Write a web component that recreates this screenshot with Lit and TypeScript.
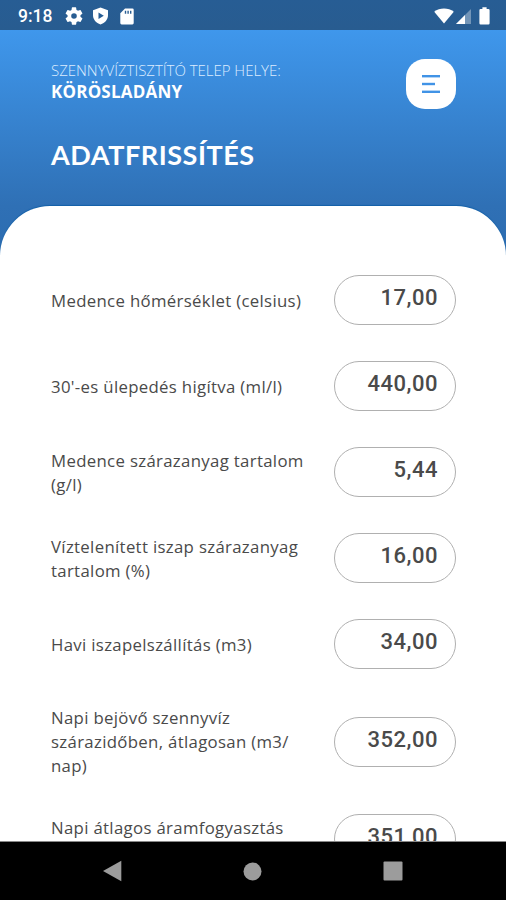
import { LitElement, html, css } from "lit";
import { customElement } from "lit/decorators.js";
import { classMap } from "lit/directives/class-map.js";

interface Reading {
  lines: string[];
  value: string;
  clipped?: boolean;
}

const readings: Reading[] = [
  { lines: ["Medence hőmérséklet (celsius)"], value: "17,00" },
  { lines: ["30'-es ülepedés higítva (ml/l)"], value: "440,00" },
  { lines: ["Medence szárazanyag tartalom", "(g/l)"], value: "5,44" },
  { lines: ["Víztelenített iszap szárazanyag", "tartalom (%)"], value: "16,00" },
  { lines: ["Havi iszapelszállítás (m3)"], value: "34,00" },
  { lines: ["Napi bejövő szennyvíz", "szárazidőben, átlagosan (m3/", "nap)"], value: "352,00" },
  { lines: ["Napi átlagos áramfogyasztás"], value: "351,00", clipped: true },
];

@customElement("status-bar")
export class StatusBar extends LitElement {
  static styles = css`
    :host {
      display: flex;
      align-items: center;
      height: 30px;
      box-sizing: border-box;
      padding: 2px 16px 0 18px;
      background: linear-gradient(#275d94, #285c90);
      color: #fff;
      font: 500 17.5px/28px Roboto, sans-serif;
    }
    .time { width: 47px; }
    .grow { flex: 1; }
    svg { display: block; fill: #fff; }
    .gear { margin-right: 9px; }
    .shield { margin-right: 11px; }
    .wifi { margin-right: 2px; }
    .signal { margin-right: 8px; }
    .faint { fill-opacity: 0.35; }
    .play { fill: #275d94; }
  `;
  render() {
    return html`
      <span class="time">9:18</span>
      <svg class="gear" width="18" height="18" viewBox="2 2 20 20">
        <path d="M19.14 12.94c.04-.3.06-.61.06-.94s-.02-.64-.07-.94l2.03-1.58a.49.49 0 0 0 .12-.61l-1.92-3.32a.49.49 0 0 0-.59-.22l-2.39.96a7 7 0 0 0-1.62-.94l-.36-2.54A.48.48 0 0 0 13.92 2.4h-3.84a.47.47 0 0 0-.47.41l-.36 2.54c-.59.24-1.13.57-1.62.94l-2.39-.96a.48.48 0 0 0-.59.22L2.74 8.87a.47.47 0 0 0 .12.61l2.03 1.58a6 6 0 0 0 0 1.88l-2.03 1.58a.49.49 0 0 0-.12.61l1.92 3.32c.12.22.37.29.59.22l2.39-.96c.5.38 1.03.7 1.62.94l.36 2.54c.05.24.24.41.48.41h3.84c.24 0 .44-.17.47-.41l.36-2.54c.59-.24 1.13-.56 1.62-.94l2.39.96c.22.08.47 0 .59-.22l1.92-3.32a.47.47 0 0 0-.12-.61zM12 15.1a3.1 3.1 0 1 1 0-6.2 3.1 3.1 0 0 1 0 6.2z"/>
      </svg>
      <svg class="shield" width="17" height="18" viewBox="0 0 17 18">
        <path d="M8.5 0.5 L16 3.2 V8 C16 12.5 13 16 8.5 17.5 C4 16 1 12.5 1 8 V3.2Z"/>
        <path class="play" d="M6.5 5.6 L11.8 8.8 L6.5 12Z"/>
      </svg>
      <svg width="14" height="17" viewBox="0 0 14 17">
        <path fill-rule="evenodd" d="M5 .5H12.4Q13.7.5 13.7 1.8V15Q13.7 16.4 12.4 16.4H1.6Q.3 16.4.3 15V5.2ZM4.8 2.8V5.8H6.2V2.8ZM7.4 2.8V5.8H8.8V2.8ZM10 2.8V5.8H11.4V2.8Z"/>
      </svg>
      <span class="grow"></span>
      <svg class="wifi" width="20" height="16" viewBox="0 0 20 16">
        <path d="M10 15.6 L.2 3.8 Q4.5.5 10 .5 T19.8 3.8Z"/>
      </svg>
      <svg class="signal" width="15" height="16" viewBox="0 0 15 16">
        <path class="faint" d="M0 16 L15 1 V16Z"/>
        <path d="M0 16 L9 7 V16Z"/>
      </svg>
      <svg width="11" height="18" viewBox="0 0 11 18">
        <path d="M3.4.3H7.6V2H9.4Q10.6 2 10.6 3.2V16.2Q10.6 17.5 9.4 17.5H1.6Q.4 17.5.4 16.2V3.2Q.4 2 1.6 2H3.4Z"/>
      </svg>
    `;
  }
}

@customElement("nav-bar")
export class NavBar extends LitElement {
  static styles = css`
    :host {
      display: flex;
      justify-content: space-between;
      align-items: center;
      height: 58px;
      box-sizing: border-box;
      padding: 0 103px 0 102px;
      background: #000;
      box-shadow: 0 -1px 0 #888;
    }
    svg { display: block; fill: #9c9c9c; }
  `;
  render() {
    return html`
      <svg width="20" height="22" viewBox="0 0 20 22"><path d="M19.3 .8V21.2L1 11Z"/></svg>
      <svg width="19" height="19" viewBox="0 0 19 19"><circle cx="9.5" cy="9.5" r="9"/></svg>
      <svg width="20" height="20" viewBox="0 0 20 20"><rect x=".5" y=".5" width="19" height="19" rx="1"/></svg>
    `;
  }
}

@customElement("app-root")
export class AppRoot extends LitElement {
  static styles = css`
    :host {
      display: flex;
      flex-direction: column;
      height: 900px;
      overflow: hidden;
      background: #fff;
      font-family: "Open Sans", sans-serif;
    }
    .screen {
      flex: 1;
      min-height: 0;
      overflow: hidden;
      background: linear-gradient(#3f97ec 0, #2f70b5 176px, #2c6cb0 230px);
    }
    .top {
      display: flex;
      justify-content: space-between;
      height: 176px;
      box-sizing: border-box;
      padding: 29px 50px 0 51px;
      color: #fff;
    }
    .caption {
      font-size: 15px;
      font-weight: 300;
      line-height: 22px;
      letter-spacing: -0.02px;
      color: #dcecff;
      white-space: nowrap;
    }
    .place {
      font-size: 17px;
      font-weight: 700;
      line-height: 22px;
      letter-spacing: 0.2px;
      white-space: nowrap;
    }
    h1 {
      margin: 34px 0 0;
      font: 700 27px/36px Lato, sans-serif;
      letter-spacing: 0.55px;
      white-space: nowrap;
    }
    .menu {
      width: 50px;
      height: 50px;
      padding: 0;
      border: 0;
      border-radius: 19px;
      background: #fff;
      display: grid;
      place-items: center;
    }
    .menu svg { display: block; fill: #4193e6; }
    .sheet {
      height: 700px;
      box-sizing: border-box;
      padding: 69px 50px 0 51px;
      border-radius: 50px 50px 0 0;
      background: #fff;
      display: flex;
      flex-direction: column;
      gap: 37px;
      box-shadow: 0 -1px 1px #1360a8;
    }
    .row {
      display: flex;
      align-items: center;
      justify-content: space-between;
      min-height: 49px;
      flex: none;
    }
    .label {
      font-size: 16.8px;
      line-height: 24px;
      letter-spacing: 0.32px;
      color: #4a4a4a;
      padding-top: 1px;
      margin-bottom: -1px;
    }
    .label.clipped { padding-bottom: 24px; }
    .line { display: block; white-space: nowrap; }
    .field {
      width: 122px;
      height: 50px;
      margin-bottom: -1px;
      box-sizing: border-box;
      border: 1px solid #b0b0b0;
      border-radius: 25px;
      padding: 0 17px 6px 0;
      text-align: right;
      font: 500 22px/43px Roboto, sans-serif;
      letter-spacing: 0.5px;
      color: #4a4a4a;
    }
  `;
  render() {
    return html`
      <status-bar></status-bar>
      <div class="screen">
        <header class="top">
          <div>
            <div class="caption">SZENNYVÍZTISZTÍTÓ TELEP HELYE:</div>
            <div class="place">KÖRÖSLADÁNY</div>
            <h1>ADATFRISSÍTÉS</h1>
          </div>
          <button class="menu" aria-label="Menü">
            <svg width="18" height="20" viewBox="0 0 18 20">
              <rect x="0" y="1" width="18" height="2.4"/>
              <rect x="0" y="8.8" width="13" height="2.4"/>
              <rect x="0" y="16.6" width="18" height="2.4"/>
            </svg>
          </button>
        </header>
        <main class="sheet">
          ${readings.map(
            (r) => html`
              <div class="row">
                <div class=${classMap({ label: true, clipped: !!r.clipped })}>
                  ${r.lines.map((l) => html`<span class="line">${l}</span>`)}
                </div>
                <div class="field">${r.value}</div>
              </div>
            `
          )}
        </main>
      </div>
      <nav-bar></nav-bar>
    `;
  }
}
